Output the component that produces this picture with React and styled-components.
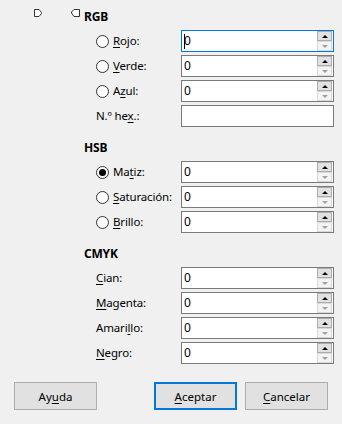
import React from "react";
import styled, { createGlobalStyle } from "styled-components";

const GlobalStyle = createGlobalStyle`
  html, body {
    margin: 0;
    padding: 0;
    background: #f0f0f0;
  }
  body {
    font-family: "Noto Sans", "Liberation Sans", sans-serif;
    font-size: 12px;
    color: #000000;
  }
`;

const StyledDialog = styled("div")`
  width: 342px;
  height: 424px;
  background: #f0f0f0;
  display: flex;
  flex-direction: column;
  box-sizing: border-box;
`;

const StyledBody = styled("div")`
  display: flex;
  flex: 1;
`;

const StyledSide = styled("div")`
  width: 84px;
  display: flex;
  align-items: flex-start;
  gap: 28px;
  padding: 9px 0 0 34px;
  box-sizing: border-box;
`;

const StyledForm = styled("div")`
  display: flex;
  flex-direction: column;
  padding-top: 9px;
`;

const StyledSection = styled("div")`
  display: flex;
  flex-direction: column;
  margin-top: ${(p) => (p.$first ? "0" : "13px")};
`;

const StyledHeading = styled("div")`
  font-weight: 700;
  font-size: 12px;
  line-height: 15px;
  height: 15px;
  margin-bottom: 6px;
  letter-spacing: -0.2px;
`;

const StyledRows = styled("div")`
  display: flex;
  flex-direction: column;
  gap: 3px;
  padding-left: 12px;
`;

const StyledRow = styled("div")`
  display: grid;
  grid-template-columns: 85px 153px;
  align-items: center;
  height: 22px;
`;

const StyledLabel = styled("div")`
  display: flex;
  align-items: center;
  gap: 4px;
  white-space: nowrap;
  line-height: 16px;
  font-size: 11.5px;
  letter-spacing: -0.15px;
`;

const StyledRadio = styled("span")`
  width: 13px;
  height: 13px;
  border-radius: 50%;
  border: 1px solid #333333;
  background: #ffffff;
  box-sizing: border-box;
  display: flex;
  align-items: center;
  justify-content: center;

  &::after {
    content: "";
    width: 7px;
    height: 7px;
    border-radius: 50%;
    background: ${(p) => (p.$checked ? "#000000" : "transparent")};
  }
`;

const StyledField = styled("div")`
  height: 22px;
  box-sizing: border-box;
  border: 1px solid ${(p) => (p.$focused ? "#0078d7" : "#7a7a7a")};
  background: #ffffff;
  display: flex;
  align-items: center;
  padding-left: 2px;
`;

const StyledValue = styled("span")`
  flex: 1;
  line-height: 16px;
  display: flex;
  align-items: center;
`;

const StyledCaret = styled("span")`
  width: 1px;
  height: 15px;
  background: #000000;
  margin-right: -1px;
`;

const StyledSpin = styled("div")`
  display: flex;
  flex-direction: column;
  margin: 0 1px 0 0;
  align-self: stretch;
  justify-content: center;
`;

const StyledSpinButton = styled("div")`
  width: 15px;
  height: 10px;
  box-sizing: border-box;
  border: 1px solid ${(p) => (p.$disabled ? "#d9d9d9" : "#adadad")};
  background: ${(p) => (p.$disabled ? "#f4f4f4" : "#e1e1e1")};
  display: flex;
  align-items: center;
  justify-content: center;

  &::after {
    content: "";
    width: 0;
    height: 0;
    border-left: 3px solid transparent;
    border-right: 3px solid transparent;
    ${(p) =>
      p.$down
        ? `border-top: 3px solid ${p.$disabled ? "#a0a0a0" : "#000000"};`
        : `border-bottom: 3px solid ${p.$disabled ? "#a0a0a0" : "#000000"};`}
  }
`;

const StyledFooter = styled("div")`
  display: flex;
  align-items: center;
  padding: 0 14px 14px 14px;
  height: 28px;
`;

const StyledSpacer = styled("div")`
  flex: 1;
`;

const StyledButton = styled("div")`
  width: 83px;
  height: 28px;
  box-sizing: border-box;
  background: #e1e1e1;
  border: ${(p) => (p.$default ? "2px solid #0078d7" : "1px solid #adadad")};
  display: flex;
  align-items: center;
  justify-content: center;
  font-size: 11.5px;
  margin-left: ${(p) => (p.$gap ? "8px" : "0")};
`;

const Key = styled("u")`
  text-decoration: underline;
  text-underline-offset: 2px;
`;

const Mn = ({ text, at }) => (
  <>
    {text.slice(0, at)}
    <Key>{text[at]}</Key>
    {text.slice(at + 1)}
  </>
);

const Spinner = ({ value, focused }) => (
  <StyledField $focused={focused}>
    <StyledValue>
      {focused && <StyledCaret />}
      {value}
    </StyledValue>
    <StyledSpin>
      <StyledSpinButton />
      <StyledSpinButton $down $disabled />
    </StyledSpin>
  </StyledField>
);

const Row = ({ label, at, radio, checked, value = "0", focused, plain }) => (
  <StyledRow>
    <StyledLabel>
      {radio && <StyledRadio $checked={checked} />}
      <span>
        <Mn text={label} at={at} />
      </span>
    </StyledLabel>
    {plain ? <StyledField /> : <Spinner value={value} focused={focused} />}
  </StyledRow>
);

const ArrowIcon = ({ flip }) => (
  <svg width="9" height="9" viewBox="0 0 9 9">
    <path
      d={flip ? "M8.5 0.5 H3 L0.5 3 V4 L3 7.5 H8.5 Z" : "M0.5 0.5 H5 L7.5 3.5 V4.5 L5 7.5 H0.5 Z"}
      fill="#ffffff"
      stroke="#333333"
      strokeWidth="1"
    />
  </svg>
);

export default function App() {
  return (
    <>
      <GlobalStyle />
      <StyledDialog>
        <StyledBody>
          <StyledSide>
            <ArrowIcon />
            <ArrowIcon flip />
          </StyledSide>
          <StyledForm>
            <StyledSection $first>
              <StyledHeading>RGB</StyledHeading>
              <StyledRows>
                <Row radio label="Rojo:" at={0} focused />
                <Row radio label="Verde:" at={0} />
                <Row radio label="Azul:" at={1} />
                <Row label="N.º hex.:" at={6} plain />
              </StyledRows>
            </StyledSection>
            <StyledSection>
              <StyledHeading>HSB</StyledHeading>
              <StyledRows>
                <Row radio checked label="Matiz:" at={2} />
                <Row radio label="Saturación:" at={0} />
                <Row radio label="Brillo:" at={0} />
              </StyledRows>
            </StyledSection>
            <StyledSection>
              <StyledHeading>CMYK</StyledHeading>
              <StyledRows>
                <Row label="Cian:" at={0} />
                <Row label="Magenta:" at={0} />
                <Row label="Amarillo:" at={5} />
                <Row label="Negro:" at={0} />
              </StyledRows>
            </StyledSection>
          </StyledForm>
        </StyledBody>
        <StyledFooter>
          <StyledButton>
            <Mn text="Ayuda" at={2} />
          </StyledButton>
          <StyledSpacer />
          <StyledButton $default>
            <Mn text="Aceptar" at={0} />
          </StyledButton>
          <StyledButton $gap>
            <Mn text="Cancelar" at={0} />
          </StyledButton>
        </StyledFooter>
      </StyledDialog>
    </>
  );
}
